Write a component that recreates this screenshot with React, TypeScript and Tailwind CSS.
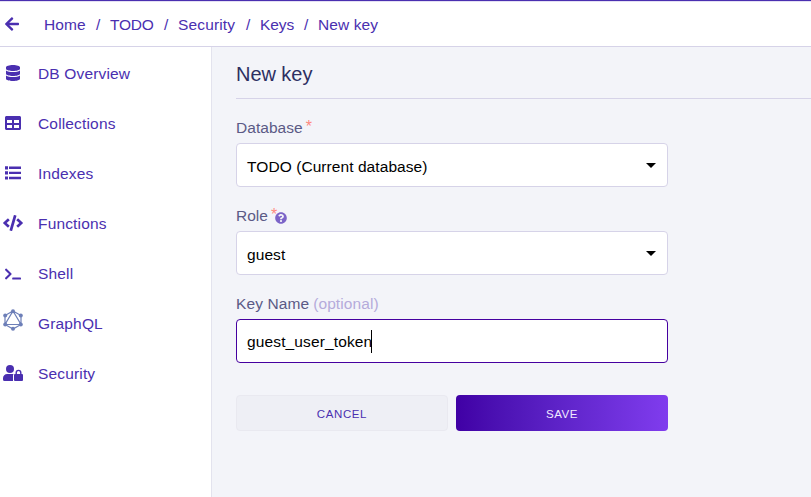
import React from "react";
import { FaArrowLeft, FaDatabase, FaTable, FaCode, FaTerminal, FaQuestionCircle } from "react-icons/fa";

const crumbs = [
  { label: "Home", cls: "tracking-[0.1px] w-[42px]" },
  { label: "TODO", cls: "tracking-[-0.2px] w-[44px]" },
  { label: "Security", cls: "tracking-[0.15px] w-[58px]" },
  { label: "Keys", cls: "tracking-[-0.1px] w-[34px]" },
  { label: "New key", cls: "tracking-[0.1px]" },
];

function ListIcon() {
  return (
    <svg width="16" height="14" viewBox="0 0 16 14" fill="currentColor">
      <path d="M0 .2h3v3.2H0zM0 5.3h3v3.2H0zM0 10.4h3v3.2H0z" />
      <path d="M4 .6h12v2.4H4zM4 5.7h12v2.4H4zM4 10.8h12v2.4H4z" />
    </svg>
  );
}

function UserLockIcon() {
  return (
    <svg width="20" height="16" viewBox="0 0 20 16" fill="currentColor">
      <circle cx="7" cy="4" r="4" />
      <path d="M4.2 9h5.6l.8.2c-.4.4-.6.8-.6 1.3V16H1.5A1.5 1.5 0 0 1 0 14.500v-1.300A4.200 4.200 0 0 1 4.200 9z" />
      <rect x="11" y="9" width="9" height="7" rx="1" />
      <path d="M13.200 9.500V7.700a2.300 2.300 0 0 1 4.600 0v1.800" fill="none" stroke="currentColor" strokeWidth="1.400" />
    </svg>
  );
}

function GraphqlIcon() {
  return (
    <svg width="22" height="22" viewBox="0 0 22 22" className="-mt-[6px]" fill="none" stroke="#6d7fb8" strokeWidth="1.2">
      <path d="M11 2L19 6.500v9L11 20l-8-4.500v-9zM11 2L19 15.500H3z" />
      <g fill="#6d7fb8" stroke="none">
        <circle cx="11" cy="2.200" r="2" />
        <circle cx="18.800" cy="6.500" r="2" />
        <circle cx="18.800" cy="15.500" r="2" />
        <circle cx="11" cy="19.800" r="2" />
        <circle cx="3.200" cy="15.500" r="2" />
        <circle cx="3.200" cy="6.500" r="2" />
      </g>
    </svg>
  );
}

const nav = [
  { label: "DB Overview", icon: <FaDatabase size={16} /> },
  { label: "Collections", icon: <FaTable size={16} /> },
  { label: "Indexes", icon: <ListIcon /> },
  { label: "Functions", icon: <FaCode size={20} /> },
  { label: "Shell", icon: <FaTerminal size={16} className="mt-[2px]" /> },
  { label: "GraphQL", icon: <GraphqlIcon /> },
  { label: "Security", icon: <UserLockIcon /> },
];

function Select({ value }: { value: string }) {
  return (
    <button type="button" className="flex h-11 w-full items-center justify-between rounded border border-[#d6d3e8] bg-white pr-[11px] pl-[10px] text-left text-black">
      <span className="pt-[4px] tracking-[0.07px]">{value}</span>
      <svg width="10" height="5" viewBox="0 0 10 5">
        <path d="M0 0h10L5 5z" fill="#000" />
      </svg>
    </button>
  );
}

function Star() {
  return <span className="ml-[3px] -mt-[3px] text-[16px] leading-4 text-[#ff8a80]">*</span>;
}

export default function App() {
  return (
    <div className="flex h-[497px] w-[811px] flex-col overflow-hidden bg-white font-['Liberation_Sans',Arial,sans-serif] text-[15.5px] leading-5 text-[#4a2fb0]">
      <header className="flex h-[47px] shrink-0 items-center border-b border-[#d6d3e8] border-t border-t-[#4a2fb0] pl-[4px] shadow-[inset_0_1px_0_#e4e0f4]">
        <FaArrowLeft size={16} className="mr-6 shrink-0" />
        <nav className="flex items-center pt-[3px]">
          {crumbs.map((c, i) => (
            <React.Fragment key={c.label}>
              {i > 0 && <span className="w-6 pl-[10px]">/</span>}
              <a className={`${c.cls} whitespace-nowrap`}>{c.label}</a>
            </React.Fragment>
          ))}
        </nav>
      </header>
      <div className="flex min-h-0 flex-1">
        <aside className="w-[212px] shrink-0 border-r border-[#e3e3ee] pt-px">
          {nav.map((n) => (
            <a key={n.label} className="flex h-[50px] items-center">
              <span className="flex w-[26px] shrink-0 justify-center">{n.icon}</span>
              <span className="ml-3 pt-[2px] tracking-[0.16px]">{n.label}</span>
            </a>
          ))}
        </aside>
        <main className="flex-1 bg-[#f3f4f9] pl-6">
          <h1 className="h-[52px] border-b border-[#d6d3e8] pt-[13px] text-[20px] leading-7 tracking-[-0.05px] text-[#2d2f62]">
            New key
          </h1>
          <form className="w-[432px] text-[#5b5a86]">
            <div className="flex h-11 items-center pt-[14px] tracking-[0.05px]">
              Database
              <Star />
            </div>
            <Select value="TODO (Current database)" />
            <div className="flex h-11 items-center pt-[14px]">
              Role
              <Star />
              <FaQuestionCircle size={12} className="-ml-[2px] mt-[4px] text-[#7c64c8]" />
            </div>
            <Select value="guest" />
            <div className="flex h-11 items-center pt-[14px] tracking-[0.1px]">
              Key Name<span className="ml-[4px] text-[#b5abdb]">(optional)</span>
            </div>
            <div className="flex h-11 items-center rounded border border-[#4500a0] bg-white pl-[10px] text-black">
              <span className="pt-[2px] tracking-[0.13px]">guest_user_token</span>
              <span className="-ml-px h-[23px] w-px bg-black" />
            </div>
            <div className="mt-8 flex gap-2 text-[11.5px]">
              <button type="button" className="h-9 w-[212px] rounded border border-[#e9e9f0] bg-[#eeeff5] pt-[2px] tracking-[0.6px] text-[#4a2fb0]">
                CANCEL
              </button>
              <button type="button" className="h-9 w-[212px] rounded bg-linear-to-r from-[#4000a5] to-[#803cee] pt-[2px] tracking-[0.5px] text-[#f0e9ff]">
                SAVE
              </button>
            </div>
          </form>
        </main>
      </div>
    </div>
  );
}
